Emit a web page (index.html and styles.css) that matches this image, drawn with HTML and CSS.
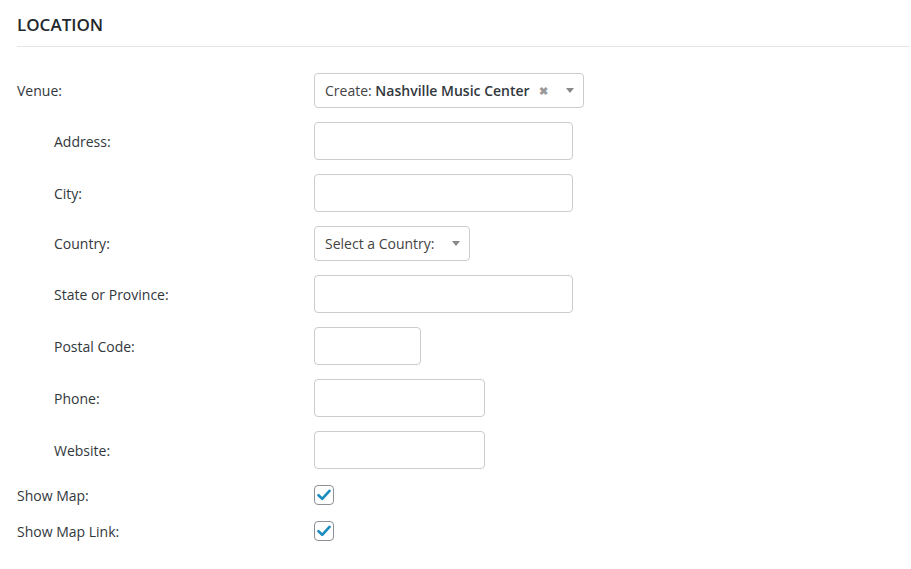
FILE: index.html
```html
<!DOCTYPE html>
<html lang="en">
<head>
    <meta charset="UTF-8">
    <title>Location</title>
    <link rel="stylesheet" href="styles.css">
</head>
<body>
    <div id="location-box">
        <h2 class="section-title">LOCATION</h2>
        <div class="fields">
            <div class="row">
                <label class="label">Venue:</label>
                <div class="select venue-select">
                    <span class="select-text">Create: <strong>Nashville Music Center</strong></span>
                    <span class="clear">&#10006;</span>
                    <span class="arrow"></span>
                </div>
            </div>
            <div class="row">
                <label class="label sub">Address:</label>
                <input class="input wide" type="text">
            </div>
            <div class="row">
                <label class="label sub">City:</label>
                <input class="input wide" type="text">
            </div>
            <div class="row">
                <label class="label sub">Country:</label>
                <div class="select country-select">
                    <span class="select-text">Select a Country:</span>
                    <span class="arrow"></span>
                </div>
            </div>
            <div class="row">
                <label class="label sub">State or Province:</label>
                <input class="input wide" type="text">
            </div>
            <div class="row">
                <label class="label sub">Postal Code:</label>
                <input class="input short" type="text">
            </div>
            <div class="row">
                <label class="label sub">Phone:</label>
                <input class="input mid" type="text">
            </div>
            <div class="row">
                <label class="label sub">Website:</label>
                <input class="input mid" type="text">
            </div>
            <div class="row check-row">
                <label class="label">Show Map:</label>
                <span class="checkbox">
                    <svg width="14" height="12" viewBox="0 0 14 12"><path d="M1.5 6.2 L5.2 9.8 L12.5 1.8" fill="none" stroke="#1e8cbe" stroke-width="2.6" stroke-linecap="round" stroke-linejoin="round"/></svg>
                </span>
            </div>
            <div class="row check-row">
                <label class="label">Show Map Link:</label>
                <span class="checkbox">
                    <svg width="14" height="12" viewBox="0 0 14 12"><path d="M1.5 6.2 L5.2 9.8 L12.5 1.8" fill="none" stroke="#1e8cbe" stroke-width="2.6" stroke-linecap="round" stroke-linejoin="round"/></svg>
                </span>
            </div>
        </div>
    </div>
</body>
</html>
```

FILE: styles.css
```css
body, html {
    margin: 0;
    padding: 0;
    background: #fff;
    font-family: 'Open Sans', 'Noto Sans', sans-serif;
    color: #3c434a;
}
#location-box {
    padding: 0 1px 0 17px;
}
.section-title {
    margin: 0;
    padding: 13px 0 9px;
    font-size: 17px;
    font-weight: 600;
    color: #23282d;
    line-height: 24px;
    border-bottom: 1px solid #e5e5e5;
}
.fields {
    display: flex;
    flex-direction: column;
    gap: 14px;
    padding-top: 26px;
}
.row {
    display: flex;
    align-items: center;
}
.check-row {
    margin-top: 2px;
}
.label {
    width: 297px;
    flex-shrink: 0;
    font-size: 14px;
    color: #32373c;
}
.label.sub {
    padding-left: 37px;
    width: 260px;
}
.input {
    box-sizing: border-box;
    height: 38px;
    border: 1px solid #ccc;
    border-radius: 4px;
    background: #fff;
    margin: 0;
    padding: 0 8px;
}
.input.wide {
    width: 259px;
}
.input.short {
    width: 107px;
}
.input.mid {
    width: 171px;
}
.select {
    box-sizing: border-box;
    height: 35px;
    border: 1px solid #ccc;
    border-radius: 4px;
    display: flex;
    align-items: center;
    padding: 0 0 0 10px;
    font-size: 14px;
    color: #444;
}
.venue-select {
    width: 270px;
}
.country-select {
    width: 156px;
}
.select strong {
    font-weight: 600;
    color: #32373c;
}
.clear {
    margin-left: 9px;
    font-size: 11px;
    font-weight: bold;
    color: #999;
}
.arrow {
    margin-left: auto;
    margin-right: 9px;
    width: 0;
    height: 0;
    border-left: 4px solid transparent;
    border-right: 4px solid transparent;
    border-top: 5px solid #888;
}
.checkbox {
    box-sizing: border-box;
    width: 20px;
    height: 20px;
    border: 1px solid #8c8f94;
    border-radius: 4px;
    display: flex;
    align-items: center;
    justify-content: center;
}
```
